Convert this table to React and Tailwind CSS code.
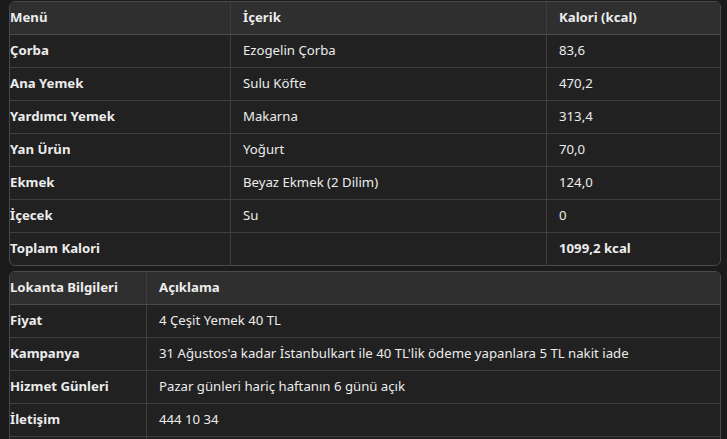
import React from "react";

const t1 = [
  ["Çorba", "Ezogelin Çorba", "83,6"],
  ["Ana Yemek", "Sulu Köfte", "470,2"],
  ["Yardımcı Yemek", "Makarna", "313,4"],
  ["Yan Ürün", "Yoğurt", "70,0"],
  ["Ekmek", "Beyaz Ekmek (2 Dilim)", "124,0"],
  ["İçecek", "Su", "0"],
];

const t2 = [
  ["Fiyat", "4 Çeşit Yemek 40 TL"],
  ["Kampanya", "31 Ağustos'a kadar İstanbulkart ile 40 TL'lik ödeme yapanlara 5 TL nakit iade"],
  ["Hizmet Günleri", "Pazar günleri hariç haftanın 6 günü açık"],
  ["İletişim", "444 10 34"],
  ["", ""],
];

export default function App() {
  return (
    <div
      className="w-[727px] h-[439px] overflow-hidden bg-[#1b1b1b] text-[#ececec] text-[13.2px]"
      style={{ fontFamily: '"Noto Sans", "Open Sans", sans-serif' }}
    >
      <div className="pl-[9px] pt-[1px] w-[721px] flex flex-col gap-[5px]">
        <div className="rounded-[6px] border border-[#4a4a4a] overflow-hidden bg-[#212121]">
          <div className="grid grid-cols-[220px_316px_1fr] bg-[#2f2f2f] h-[33px] items-center font-bold border-b border-[#4a4a4a]">
            <div className="h-full flex items-center">Menü</div>
            <div className="h-full flex items-center pl-[12px] border-l border-[#3e3e3e]">İçerik</div>
            <div className="h-full flex items-center pl-[12px] border-l border-[#3e3e3e]">Kalori (kcal)</div>
          </div>
          {t1.map((r) => (
            <div key={r[0]} className="grid grid-cols-[220px_316px_1fr] h-[33px] items-center border-b border-[#3e3e3e]">
              <div className="h-full flex items-center font-bold">{r[0]}</div>
              <div className="h-full flex items-center pl-[12px] border-l border-[#3e3e3e]">{r[1]}</div>
              <div className="h-full flex items-center pl-[12px] border-l border-[#3e3e3e]">{r[2]}</div>
            </div>
          ))}
          <div className="grid grid-cols-[220px_316px_1fr] h-[32px] items-center">
            <div className="h-full flex items-center font-bold">Toplam Kalori</div>
            <div className="h-full flex items-center pl-[12px] border-l border-[#3e3e3e]"></div>
            <div className="h-full flex items-center pl-[12px] border-l border-[#3e3e3e] font-bold">1099,2 kcal</div>
          </div>
        </div>
        <div className="rounded-t-[6px] border border-[#4a4a4a] overflow-hidden bg-[#212121]">
          <div className="grid grid-cols-[136px_1fr] bg-[#2f2f2f] h-[33px] items-center font-bold border-b border-[#4a4a4a]">
            <div className="h-full flex items-center">Lokanta Bilgileri</div>
            <div className="h-full flex items-center pl-[12px] border-l border-[#3e3e3e]">Açıklama</div>
          </div>
          {t2.map((r, i) => (
            <div key={i} className="grid grid-cols-[136px_1fr] h-[33px] items-center border-b border-[#3e3e3e]">
              <div className="h-full flex items-center font-bold">{r[0]}</div>
              <div className="h-full flex items-center pl-[12px] border-l border-[#3e3e3e]">{r[1]}</div>
            </div>
          ))}
        </div>
      </div>
    </div>
  );
}
